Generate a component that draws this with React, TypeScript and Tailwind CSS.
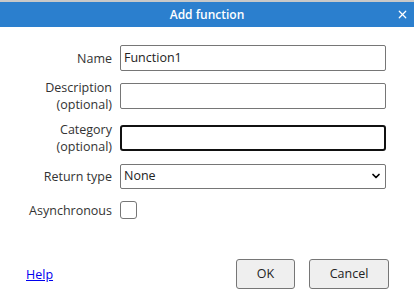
import {ChevronDown, X} from "lucide-react";

const font = {fontFamily: '"Open Sans", "Noto Sans", sans-serif'};

const Label = ({children}: {children: React.ReactNode}) => (
    <div className="w-[112px] shrink-0 text-right leading-[17px] text-[#333]">
        {children}
    </div>
)

const AddFunctionDialog = () => {
    return (
        <div className="w-[414px] h-[299px] bg-white border-t-2 border-[#c8c8c8] flex flex-col text-[12.5px]" style={font}>
            <div className="h-[25px] bg-[#2b7fce] flex items-center justify-center relative text-white text-[12px] font-semibold">
                Add function
                <X className="absolute right-[5px] top-[6px]" size={13} strokeWidth={2.2}/>
            </div>
            <div className="flex flex-col gap-[8px] pt-[18px]">
                <div className="flex items-center gap-[8px] h-[26px]">
                    <Label>Name</Label>
                    <div className="w-[266px] h-[26px] border border-[#767676] rounded-[2px] flex items-center px-[3px] text-[#222]">
                        Function1
                    </div>
                </div>
                <div className="flex items-center gap-[8px] h-[34px]">
                    <Label>Description<br/>(optional)</Label>
                    <div className="w-[266px] h-[26px] border border-[#767676] rounded-[2px]"/>
                </div>
                <div className="flex items-center gap-[8px] h-[34px]">
                    <Label>Category<br/>(optional)</Label>
                    <div className="w-[266px] h-[26px] border-2 border-[#111] rounded-[3px]"/>
                </div>
                <div className="flex items-center gap-[8px] h-[26px]">
                    <Label>Return type</Label>
                    <div className="w-[266px] h-[25px] border border-[#767676] rounded-[2px] flex items-center justify-between pl-[3px] pr-[3px] text-[#222]">
                        None
                        <ChevronDown size={12} strokeWidth={3.5} className="text-black"/>
                    </div>
                </div>
                <div className="flex items-center gap-[8px] h-[26px]">
                    <Label>Asynchronous</Label>
                    <div className="w-[17px] h-[18px] border border-[#767676] rounded-[3px]"/>
                </div>
            </div>
            <div className="flex items-center mt-auto mb-[10px] pl-[26px] pr-[25px]">
                <a href="#" className="text-[#0000ee] underline mt-[3px]">Help</a>
                <div className="ml-auto flex gap-[14px]">
                    <button className="w-[59px] h-[30px] bg-[#efefef] border border-[#767676] rounded-[3px] text-[#222]">
                        OK
                    </button>
                    <button className="w-[80px] h-[30px] bg-[#efefef] border border-[#767676] rounded-[3px] text-[#222]">
                        Cancel
                    </button>
                </div>
            </div>
        </div>
    )
}

export default function App() {
    return <AddFunctionDialog/>
}
